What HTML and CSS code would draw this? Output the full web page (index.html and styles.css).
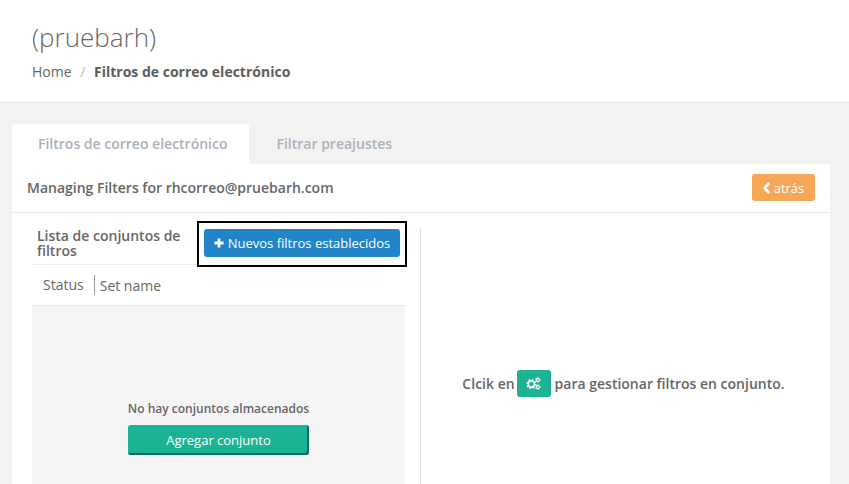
FILE: index.html
```html
<!DOCTYPE html>
<html lang="en">
<head>
    <meta charset="UTF-8">
    <meta name="viewport" content="width=device-width, initial-scale=1.0">
    <title>Filtros de correo electrónico</title>
    <link rel="stylesheet" href="styles.css">
</head>
<body>
    <header class="page-head">
        <h1 class="page-title">(pruebarh)</h1>
        <div class="breadcrumb">
            <span>Home</span>
            <span class="crumb-sep">/</span>
            <strong>Filtros de correo electrónico</strong>
        </div>
    </header>
    <main class="content">
        <div class="tabs">
            <div class="tab tab-active">Filtros de correo electrónico</div>
            <div class="tab">Filtrar preajustes</div>
        </div>
        <section class="panel">
            <div class="panel-head">
                <span class="panel-title">Managing Filters for rhcorreo@pruebarh.com</span>
                <button class="btn btn-back">
                    <svg class="icon-back" viewBox="0 0 8 12"><path d="M6.3 1 1.6 6l4.7 5" fill="none" stroke="#fff" stroke-width="2.6"/></svg>
                    atrás
                </button>
            </div>
            <div class="panel-body">
                <div class="sets">
                    <div class="sets-head">
                        <div class="sets-title">Lista de conjuntos de filtros</div>
                        <div class="highlight">
                            <button class="btn btn-new">
                                <svg class="icon-plus" viewBox="0 0 10 10"><path d="M5 .5v9M.5 5h9" fill="none" stroke="#fff" stroke-width="2.8"/></svg>
                                Nuevos filtros establecidos
                            </button>
                        </div>
                    </div>
                    <div class="sets-cols">
                        <span class="col-status">Status</span>
                        <span class="col-name">Set name</span>
                    </div>
                    <div class="sets-empty">
                        <div class="empty-text">No hay conjuntos almacenados</div>
                        <button class="btn btn-add">Agregar conjunto</button>
                    </div>
                </div>
                <div class="manage">
                    <span>Clcik en</span>
                    <span class="gear-badge">
                        <svg class="icon-gears" viewBox="0 0 14 12">
                            <circle cx="5" cy="6.5" r="2.9" fill="none" stroke="#fff" stroke-width="1.5"/>
                            <circle cx="5" cy="6.5" r="4.1" fill="none" stroke="#fff" stroke-width="1.3" stroke-dasharray="1.6 1.62"/>
                            <circle cx="11" cy="2.6" r="1.4" fill="none" stroke="#fff" stroke-width="1"/>
                            <circle cx="11" cy="2.6" r="2.2" fill="none" stroke="#fff" stroke-width=".8" stroke-dasharray="1 1.3"/>
                            <circle cx="11" cy="9.4" r="1.4" fill="none" stroke="#fff" stroke-width="1"/>
                            <circle cx="11" cy="9.4" r="2.2" fill="none" stroke="#fff" stroke-width=".8" stroke-dasharray="1 1.3"/>
                        </svg>
                    </span>
                    <span>para gestionar filtros en conjunto.</span>
                </div>
            </div>
        </section>
    </main>
</body>
</html>
```

FILE: styles.css
```css
html, body {
    height: 100%;
}
body {
    font-family: "Open Sans", Arial, sans-serif;
    background-color: #f2f2f2;
    color: #666;
    margin: 0;
    display: flex;
    flex-direction: column;
    overflow: hidden;
}
.page-head {
    background: #fff;
    border-bottom: 1px solid #e5e6e7;
    height: 103px;
    padding: 20px 32px 0;
    box-sizing: border-box;
    flex-shrink: 0;
}
.page-title {
    font-size: 26px;
    font-weight: 300;
    line-height: 35px;
    margin: 0 0 7px;
    color: #666;
}
.breadcrumb {
    font-size: 14px;
    line-height: 19px;
    color: #666;
}
.breadcrumb strong {
    font-weight: 700;
    color: #5c5c5c;
}
.crumb-sep {
    color: #bbb;
    margin: 0 5px 0 5px;
}
.content {
    flex: 1;
    display: flex;
    flex-direction: column;
    padding: 21px 19px 0 12px;
    min-height: 0;
}
.tabs {
    display: flex;
    height: 40px;
    flex-shrink: 0;
}
.tab {
    padding: 0 28px;
    font-size: 14px;
    font-weight: 600;
    line-height: 40px;
    color: #a9b1bd;
    border-radius: 3px 3px 0 0;
}
.tab-active {
    background: #fff;
    padding: 0 21px 0 26px;
}
.panel {
    flex: 1;
    background: #fff;
    display: flex;
    flex-direction: column;
    min-height: 0;
}
.panel-head {
    height: 49px;
    box-sizing: border-box;
    border-bottom: 1px solid #e8e9ea;
    padding: 0 15px 1px;
    display: flex;
    align-items: center;
    justify-content: space-between;
    flex-shrink: 0;
}
.panel-title {
    font-size: 14px;
    font-weight: 600;
    color: #666;
}
.btn {
    font-family: inherit;
    border: none;
    color: #fff;
    cursor: pointer;
    padding: 0;
}
.btn-back {
    background-color: #f6a856;
    width: 63px;
    height: 27px;
    border-radius: 3px;
    font-size: 13px;
    display: flex;
    align-items: center;
    justify-content: center;
    gap: 3px;
}
.icon-back {
    width: 8px;
    height: 12px;
}
.panel-body {
    flex: 1;
    display: flex;
    padding: 8px 0 0 20px;
    min-height: 0;
}
.sets {
    width: 373px;
    flex-shrink: 0;
    display: flex;
    flex-direction: column;
}
.sets-head {
    height: 43px;
    border-bottom: 1px solid #eee;
    display: flex;
    justify-content: space-between;
    padding-left: 5px;
    flex-shrink: 0;
}
.sets-title {
    font-size: 14px;
    font-weight: 600;
    line-height: 15px;
    width: 155px;
    padding-top: 7px;
}
.highlight {
    border: 2px solid #000;
    padding: 6px 5px;
    height: 46px;
    box-sizing: border-box;
    margin-right: -2px;
    background: #fff;
}
.btn-new {
    background-color: #2185c8;
    width: 196px;
    height: 28px;
    border-radius: 3px;
    font-size: 13px;
    display: flex;
    align-items: center;
    justify-content: center;
    gap: 4px;
}
.icon-plus {
    width: 10px;
    height: 10px;
}
.sets-cols {
    height: 40px;
    border-bottom: 1px solid #eaeaea;
    font-size: 14px;
    display: flex;
    align-items: center;
    padding-left: 11px;
    flex-shrink: 0;
}
.col-status {
    padding-right: 10px;
    border-right: 1px solid #999;
    line-height: 20px;
}
.col-name {
    padding-left: 5px;
}
.sets-empty {
    flex: 1;
    background: #f5f5f5;
    display: flex;
    flex-direction: column;
    align-items: center;
    padding-top: 95px;
}
.empty-text {
    font-size: 12px;
    font-weight: 600;
    line-height: 16px;
    margin-bottom: 8px;
}
.btn-add {
    background-color: #1cb394;
    width: 181px;
    height: 30px;
    border-radius: 3px;
    font-size: 13px;
    box-shadow: inset -2px -2px 0 #126d5b;
}
.manage {
    flex: 1;
    margin: 7px 0 0 15px;
    border-left: 1px solid #e0e0e0;
    display: flex;
    justify-content: center;
    gap: 4px;
    align-items: flex-start;
    padding: 142px 4px 0 0;
    font-size: 14px;
    font-weight: 600;
    line-height: 27px;
}
.gear-badge {
    background-color: #1cb394;
    width: 34px;
    height: 27px;
    margin-left: -2px;
    border-radius: 3px;
    display: flex;
    align-items: center;
    justify-content: center;
}
.icon-gears {
    width: 15px;
    height: 13px;
}
```
